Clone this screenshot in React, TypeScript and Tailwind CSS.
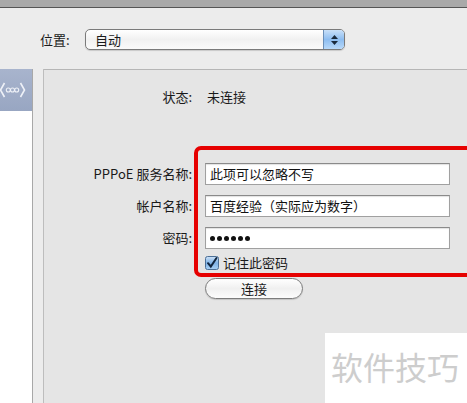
import React from 'react'

const font = { fontFamily: '"Noto Sans CJK SC", "Noto Sans", sans-serif' }

function Checkbox() {
  return (
    <svg width="14" height="14" viewBox="0 0 14 14" className="shrink-0">
      <defs>
        <linearGradient id="cb" x1="0" y1="0" x2="0" y2="1">
          <stop offset="0" stopColor="#cfe3f8" />
          <stop offset="0.5" stopColor="#7fb2e6" />
          <stop offset="1" stopColor="#a9d0f5" />
        </linearGradient>
      </defs>
      <rect x="0.5" y="0.5" width="13" height="13" rx="2" fill="url(#cb)" stroke="#4c6f96" />
      <path d="M3 7.2 L5.8 10.5 L11.5 2" fill="none" stroke="#10243d" strokeWidth="2" strokeLinecap="round" />
    </svg>
  )
}

function NavGlyph() {
  return (
    <svg width="26" height="16" viewBox="0 0 26 16">
      <path d="M4.5 1 L0.5 8 L4.5 15" fill="none" stroke="#eef1f7" strokeWidth="1.6" />
      <path d="M20.5 1 L24.5 8 L20.5 15" fill="none" stroke="#eef1f7" strokeWidth="1.6" />
      <circle cx="8.3" cy="8" r="2" fill="none" stroke="#eef1f7" strokeWidth="1.1" />
      <circle cx="12.5" cy="8" r="2" fill="none" stroke="#eef1f7" strokeWidth="1.1" />
      <circle cx="16.7" cy="8" r="2" fill="none" stroke="#eef1f7" strokeWidth="1.1" />
    </svg>
  )
}

function Field({ value, dots }: { value: string; dots?: boolean }) {
  return (
    <div className="h-[22px] w-[245px] bg-white border border-[#a0a0a0] border-t-[#8a8a8a] shadow-[inset_0_1px_1px_rgba(0,0,0,0.12)] flex items-center px-[4px] text-[13px] text-[#111]">
      {dots ? (
        <span className="flex gap-[2px]">
          {[0, 1, 2, 3, 4, 5].map(i => (
            <span key={i} className="w-[5px] h-[5px] rounded-full bg-[#111]" />
          ))}
        </span>
      ) : (
        value
      )}
    </div>
  )
}

export default function App() {
  return (
    <div className="w-[467px] h-[403px] overflow-hidden bg-[#ececec] relative flex flex-col text-[#1a1a1a]" style={font}>
      <div className="h-[8px] shrink-0 bg-[#a9a9a9] border-b border-[#555]" />

      <div className="h-[61px] shrink-0 flex items-center pl-[40px] pt-[2px]">
        <span className="w-[45px] text-[13px]">位置:</span>
        <div className="w-[260px] h-[21px] rounded-[5px] border border-[#7a7a7a] bg-gradient-to-b from-white via-[#f1f1f1] to-[#fafafa] flex items-center overflow-hidden shadow-[0_1px_1px_rgba(0,0,0,0.15)]">
          <span className="flex-1 pl-[9px] text-[13px]">自动</span>
          <div className="w-[21px] h-full bg-gradient-to-b from-[#c9e0f8] via-[#8dbdf0] to-[#b8d9fa] border-l border-[#6b8fb8] flex flex-col items-center justify-center gap-[2px]">
            <svg width="7" height="4" viewBox="0 0 7 4"><path d="M0 4 L3.5 0 L7 4 Z" fill="#1a2a3c" /></svg>
            <svg width="7" height="4" viewBox="0 0 7 4"><path d="M0 0 L3.5 4 L7 0 Z" fill="#1a2a3c" /></svg>
          </div>
        </div>
      </div>

      <div className="flex flex-1 min-h-0">
        <div className="w-[33px] shrink-0 bg-white border-r border-[#a8a8a8] flex flex-col">
          <div className="h-[42px] bg-gradient-to-b from-[#a8b4cd] to-[#98a6c2] flex items-center overflow-hidden">
            <NavGlyph />
          </div>
        </div>
        <div className="w-[11px] shrink-0 bg-[#ececec] border-r border-[#bdbdbd]" />
        <div className="flex-1 bg-[#e5e5e5] border-t border-[#b6b6b6] pt-[18px] text-[13px]">
          <div className="grid grid-cols-[148px_1fr] gap-x-[13px] items-center">
            <span className="text-right leading-[18px]">状态:</span>
            <span className="pl-[2px] leading-[18px]">未连接</span>
          </div>

          <div className="grid grid-cols-[148px_1fr] gap-x-[13px] gap-y-[10px] items-center mt-[57px]">
            <span className="text-right">PPPoE 服务名称:</span>
            <Field value="此项可以忽略不写" />
            <span className="text-right">帐户名称:</span>
            <Field value="百度经验（实际应为数字）" />
            <span className="text-right">密码:</span>
            <Field value="" dots />
          </div>

          <div className="grid grid-cols-[148px_1fr] gap-x-[13px] mt-[7px]">
            <span />
            <div className="flex items-center gap-[4px] h-[14px]">
              <Checkbox />
              <span>记住此密码</span>
            </div>
          </div>

          <div className="grid grid-cols-[148px_1fr] gap-x-[13px] mt-[8px]">
            <span />
            <div className="w-[98px] h-[21px] rounded-full border border-[#7c7c7c] bg-gradient-to-b from-white via-[#f0f0f0] to-[#fcfcfc] flex items-center justify-center shadow-[0_1px_1px_rgba(0,0,0,0.15)]">
              连接
            </div>
          </div>
        </div>
      </div>

      <div className="absolute left-[194px] top-[146px] right-[-12px] h-[131px] border-[4px] border-[#e60000] rounded-[7px]" />

      <div className="absolute left-[325px] top-[333px] right-0 bottom-0 bg-white pl-[6px] pt-[13px] text-[32px] leading-[40px] text-[#cdcdcd]">
        软件技巧
      </div>
    </div>
  )
}
